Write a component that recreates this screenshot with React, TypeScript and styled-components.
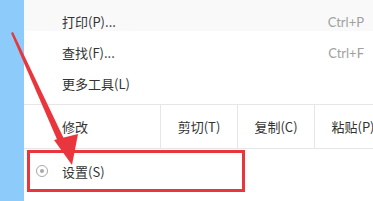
import React from "react";
import styled, { createGlobalStyle } from "styled-components";

const Global = createGlobalStyle`
  html, body { margin: 0; padding: 0; }
  body {
    width: 373px;
    height: 201px;
    overflow: hidden;
    background: #ffffff;
    font-family: "Noto Sans CJK SC", "Noto Sans", sans-serif;
  }
`;

const Screen = styled.div`
  position: relative;
  display: flex;
  width: 373px;
  height: 201px;
  overflow: hidden;
`;

const Desktop = styled.div`
  width: 24px;
  flex: 0 0 24px;
  background: #8dcbfa;
`;

const Menu = styled.div`
  flex: 1;
  display: flex;
  flex-direction: column;
  padding-top: 6px;
  background: linear-gradient(#f9f9f9 0 31px, #ffffff 31px);
  overflow: hidden;
`;

const Item = styled.div<{ $h?: number }>`
  position: relative;
  display: flex;
  align-items: center;
  flex: 0 0 ${(p) => p.$h ?? 31}px;
  height: ${(p) => p.$h ?? 31}px;
  padding: 0 9px 0 38px;
  font-size: 13px;
  color: #333333;
  white-space: nowrap;
`;

const Label = styled.span`
  flex: 1;
`;

const Shortcut = styled.span`
  font-family: "Lato", "Open Sans", sans-serif;
  font-size: 13px;
  color: #a0a0a0;
`;

const EditRow = styled.div`
  display: grid;
  grid-template-columns: 136px repeat(3, 77px);
  margin-top: 5px;
  height: 43px;
  flex: 0 0 43px;
  border-top: 1px solid #e6e6e6;
  border-bottom: 1px solid #e6e6e6;
  font-size: 13px;
  color: #333333;
  white-space: nowrap;
`;

const EditLabel = styled.div`
  display: flex;
  align-items: center;
  padding-left: 38px;
`;

const EditCell = styled.div`
  display: flex;
  align-items: center;
  justify-content: center;
  border-left: 1px solid #e6e6e6;
`;

const Radio = styled.span`
  position: absolute;
  left: 12px;
  top: 50%;
  width: 10px;
  height: 10px;
  margin-top: -6.5px;
  border: 1.5px solid #a8a8a8;
  border-radius: 50%;
  display: flex;
  align-items: center;
  justify-content: center;
  &::after {
    content: "";
    width: 4px;
    height: 4px;
    border-radius: 50%;
    background: #a8a8a8;
  }
`;

const Highlight = styled.div`
  position: absolute;
  left: 3px;
  top: 1px;
  width: 212px;
  height: 36px;
  border: 3px solid #e8363c;
  pointer-events: none;
`;

const Arrow = styled.svg`
  position: absolute;
  left: 0;
  top: 0;
  width: 373px;
  height: 201px;
  pointer-events: none;
`;

export default function App() {
  return (
    <>
      <Global />
      <Screen>
        <Desktop />
        <Menu>
          <Item>
            <Label>打印(P)...</Label>
            <Shortcut>Ctrl+P</Shortcut>
          </Item>
          <Item>
            <Label>查找(F)...</Label>
            <Shortcut>Ctrl+F</Shortcut>
          </Item>
          <Item>
            <Label>更多工具(L)</Label>
          </Item>
          <EditRow>
            <EditLabel>修改</EditLabel>
            <EditCell>剪切(T)</EditCell>
            <EditCell>复制(C)</EditCell>
            <EditCell>粘贴(P)</EditCell>
          </EditRow>
          <Item $h={44}>
            <Radio />
            <Label>设置(S)</Label>
            <Highlight />
          </Item>
          <Item $h={32}>
            <Label>检查新版本</Label>
          </Item>
        </Menu>
        <Arrow viewBox="0 0 373 201">
          <polygon points="11,33 13,32 65,141 59,144" fill="#e8363c" />
          <polygon points="54,140 78,134 72,165" fill="#e8363c" />
        </Arrow>
      </Screen>
    </>
  );
}
